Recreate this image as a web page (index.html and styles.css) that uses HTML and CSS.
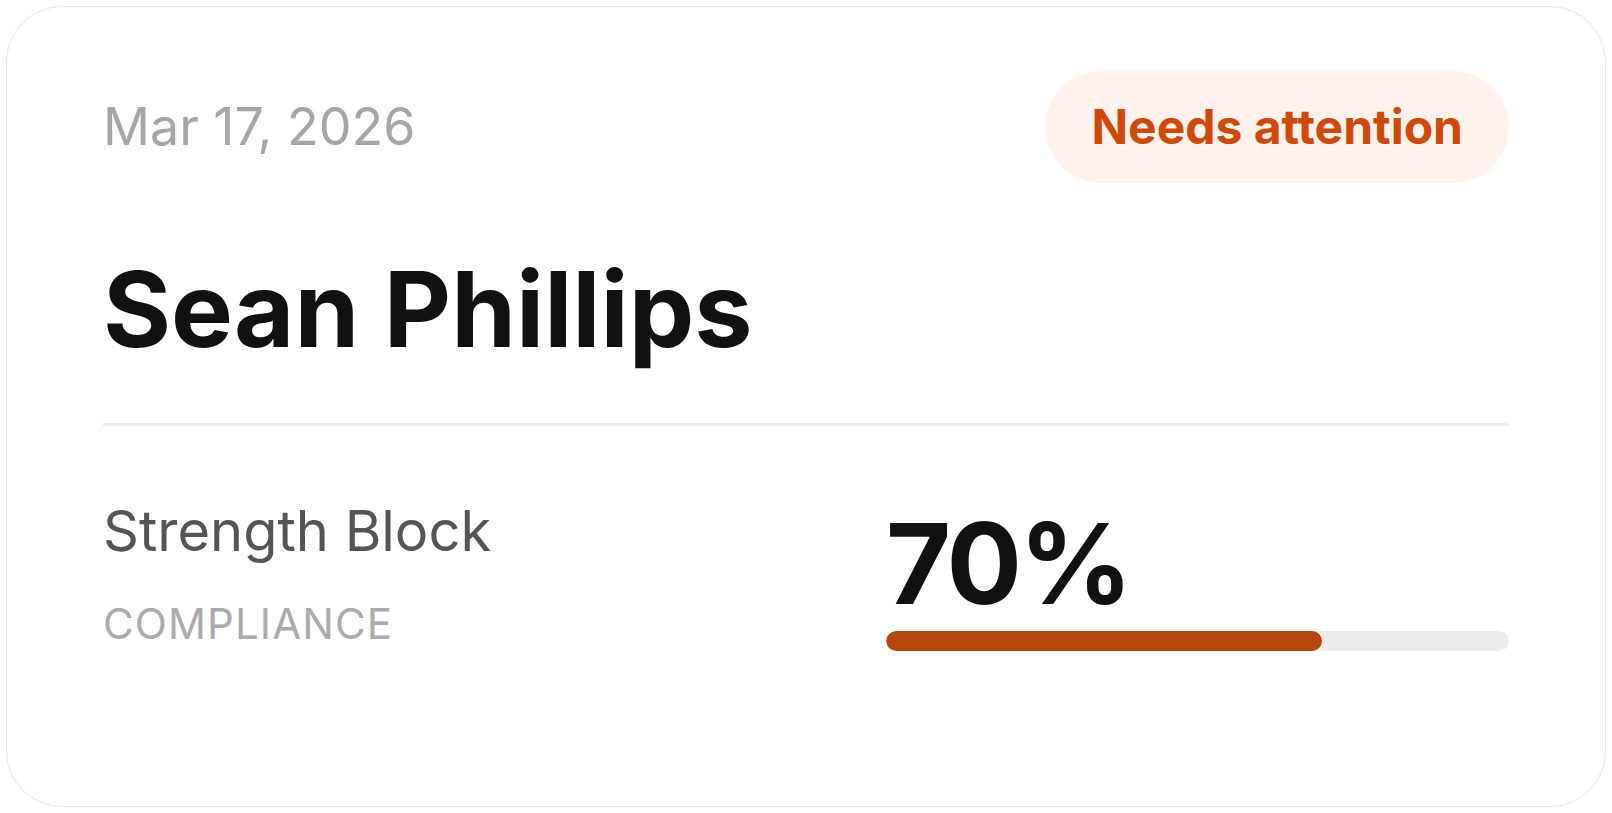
FILE: index.html
```html
<!DOCTYPE html>
<html lang="en">
<head>
<meta charset="utf-8">
<title>Compliance card</title>
<link rel="stylesheet" href="styles.css">
</head>
<body>
<div class="card">
  <div class="header">
    <span class="date">Mar 17, 2026</span>
    <span class="badge">Needs attention</span>
  </div>
  <h1 class="name">Sean Phillips</h1>
  <div class="divider"></div>
  <div class="stats">
    <div class="program">
      <div class="program-name">Strength Block</div>
      <div class="program-label">COMPLIANCE</div>
    </div>
    <div class="metric">
      <div class="metric-value">70%</div>
      <div class="bar"><div class="bar-fill" style="width:70%"></div></div>
    </div>
  </div>
</div>
</body>
</html>
```
FILE: styles.css
```css
* { box-sizing: border-box; }
html, body { margin: 0; padding: 0; background: #ffffff; }
body {
  padding: 6px;
  font-family: Inter, "Noto Sans", sans-serif;
}
.card {
  width: 1600px;
  height: 801px;
  border: 1.5px solid #e6e6e6;
  border-radius: 56px;
  padding: 64px 96px 0 96px;
  background: #fff;
}
.header {
  display: flex;
  justify-content: space-between;
  align-items: center;
}
.date {
  font-size: 52px;
  line-height: 64px;
  color: #a6a6a6;
  font-weight: 400;
}
.badge {
  background: #fff2ec;
  color: #cf4a0a;
  font-size: 48px;
  font-weight: 700;
  line-height: 48px;
  padding: 32px 46px;
  border-radius: 999px;
}
.name {
  margin: 64px 0 0 0;
  font-size: 104px;
  line-height: 124px;
  font-weight: 700;
  color: #111111;
  letter-spacing: 0;
}
.divider {
  margin-top: 52px;
  height: 3px;
  background: #ededed;
}
.stats {
  display: grid;
  grid-template-columns: 1fr 623px;
  margin-top: 69px;
}
.program-name {
  font-size: 56px;
  line-height: 72px;
  color: #555555;
}
.program-label {
  margin-top: 33px;
  font-size: 42px;
  line-height: 48px;
  color: #ababab;
  letter-spacing: 1.1px;
}
.metric { padding-top: 12px; }
.metric-value {
  font-size: 112px;
  line-height: 112px;
  font-weight: 700;
  color: #111111;
  letter-spacing: -3px;
}
.bar {
  margin-top: 12px;
  height: 20px;
  background: #ececed;
  border-radius: 10px;
  overflow: hidden;
}
.bar-fill {
  height: 100%;
  background: #b5480a;
  border-radius: 10px;
}
```
